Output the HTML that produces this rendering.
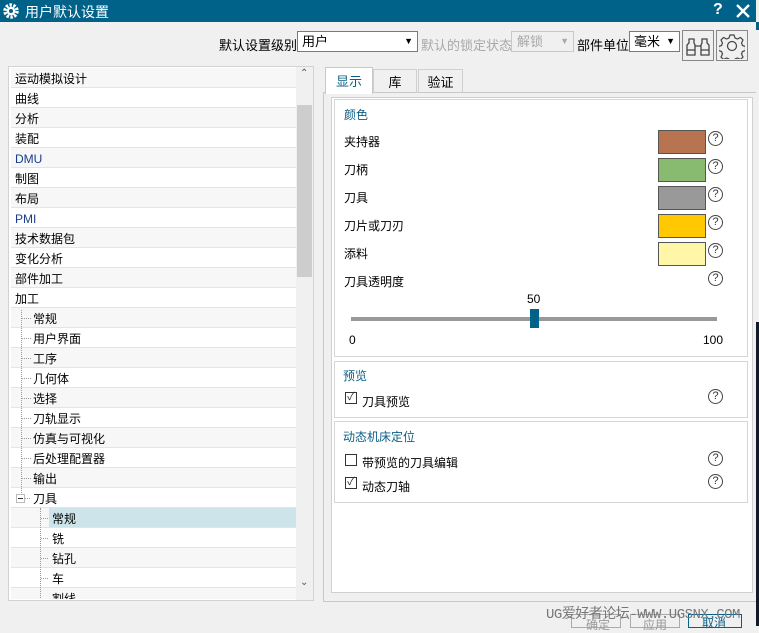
<!DOCTYPE html>
<html><head><meta charset="utf-8"><style>
*{margin:0;padding:0;box-sizing:border-box}
body{width:759px;height:626px;overflow:hidden;background:#f0f0f0;font-family:"Liberation Sans","Noto Sans CJK SC",sans-serif;font-size:12px;color:#000;position:relative}
.a{position:absolute}
.title{left:0;top:0;width:759px;height:22px;background:#006189;color:#fff;font-size:14px}
.row{position:absolute;left:0;width:287px;height:20px;line-height:19px;padding-top:2px;border-bottom:1px solid #e4e4e4;padding-left:4px;white-space:nowrap}
.blue{color:#1a3c8c}
.sw{position:absolute;left:658px;width:48px;height:24px;border:1px solid #555}
.q{position:absolute;left:708px;width:15px;height:15px;border:1.3px solid #444;border-radius:50%;font-size:11px;line-height:12px;text-align:center;color:#333}
.lbl{position:absolute;left:344px}
.grp{position:absolute;left:334px;width:414px;border:1px solid #d6d6d6;background:#fff}
.gt{position:absolute;color:#0a5f86;font-size:12px}
.cb{position:absolute;left:345px;width:12px;height:12px;border:1px solid #333;background:#fff;font-size:11px;line-height:9px;text-align:center;color:#333}
</style></head><body>
<div class="a title">
  <svg class="a" style="left:2px;top:2px" width="18" height="18" viewBox="0 0 18 18"><circle cx="9" cy="9" r="6" fill="none" stroke="#fff" stroke-width="3.5" stroke-dasharray="2.4 1.4"/><circle cx="9" cy="9" r="4.3" fill="#fff"/><circle cx="9" cy="9" r="2" fill="#006189"/></svg>
  <span class="a" style="left:25px;top:2px">用户默认设置</span>
  <span class="a" style="left:713px;top:1px;font-weight:bold;font-size:16px">?</span>
  <svg class="a" style="left:736px;top:4px" width="14" height="14"><path d="M1 1L13 13M13 1L1 13" stroke="#fff" stroke-width="2.4"/></svg>
</div>
<span class="a" style="left:219px;top:35px;font-size:13px">默认设置级别</span>
<div class="a" style="left:297px;top:31px;width:121px;height:21px;border:1px solid #7a7a7a;background:#fff;padding-left:4px;line-height:19px;font-size:13px">用户<span class="a" style="right:4px;top:0;font-size:9px">▼</span></div>
<span class="a" style="left:421px;top:35px;font-size:13px;color:#a8a8a8">默认的锁定状态</span>
<div class="a" style="left:511px;top:31px;width:63px;height:21px;border:1px solid #c8c8c8;background:#f0f0f0;color:#a8a8a8;padding-left:5px;line-height:19px;font-size:13px">解锁<span class="a" style="right:4px;top:0;font-size:9px">▼</span></div>
<span class="a" style="left:577px;top:35px;font-size:13px">部件单位</span>
<div class="a" style="left:629px;top:31px;width:51px;height:21px;border:1px solid #7a7a7a;background:#fff;padding-left:4px;line-height:19px;font-size:13px">毫米<span class="a" style="right:4px;top:0;font-size:9px">▼</span></div>
<div class="a" style="left:682px;top:30px;width:32px;height:31px;border:1px solid #888"></div>
<svg class="a" style="left:686px;top:34px" width="24" height="24" viewBox="0 0 24 24" fill="none" stroke="#444" stroke-width="1.3"><path d="M3 5h5v4l1 2v10H1V11l2-2zM16 5h5v4l2 2v10h-8V11l1-2zM9 12h6M1 16h8M15 16h8"/></svg>
<div class="a" style="left:716px;top:30px;width:32px;height:31px;border:1px solid #888"></div>
<svg class="a" style="left:719px;top:33px" width="26" height="26" viewBox="0 0 26 26" fill="none" stroke="#444" stroke-width="1.2"><path d="M11 2h4l1 3 2.5 1 3-1.5 2.5 2.5-1.5 3 1 2.5 3 1v4l-3 1-1 2.5 1.5 3-2.5 2.5-3-1.5-2.5 1-1 3h-4l-1-3-2.5-1-3 1.5-2.5-2.5 1.5-3-1-2.5-3-1v-4l3-1 1-2.5-1.5-3 2.5-2.5 3 1.5 2.5-1z"/><circle cx="13" cy="13" r="4.5"/></svg>

<!-- tree -->
<div class="a" style="left:8px;top:66px;width:306px;height:535px;border:1px solid #d2d2d2;background:#fff;overflow:hidden">
 <div class="a" style="left:2px;top:1px;width:287px;height:531px;overflow:hidden">
  <div class="row" style="top:0;background:#f7f7f7">运动模拟设计</div>
  <div class="row" style="top:20px">曲线</div>
  <div class="row" style="top:40px;background:#f7f7f7">分析</div>
  <div class="row" style="top:60px">装配</div>
  <div class="row blue" style="top:80px;background:#f7f7f7">DMU</div>
  <div class="row" style="top:100px">制图</div>
  <div class="row" style="top:120px;background:#f7f7f7">布局</div>
  <div class="row blue" style="top:140px">PMI</div>
  <div class="row" style="top:160px;background:#f7f7f7">技术数据包</div>
  <div class="row" style="top:180px">变化分析</div>
  <div class="row" style="top:200px;background:#f7f7f7">部件加工</div>
  <div class="row" style="top:220px">加工</div>
  <div class="row" style="top:240px;background:#f7f7f7;padding-left:22px">常规</div>
  <div class="row" style="top:260px;padding-left:22px">用户界面</div>
  <div class="row" style="top:280px;background:#f7f7f7;padding-left:22px">工序</div>
  <div class="row" style="top:300px;padding-left:22px">几何体</div>
  <div class="row" style="top:320px;background:#f7f7f7;padding-left:22px">选择</div>
  <div class="row" style="top:340px;padding-left:22px">刀轨显示</div>
  <div class="row" style="top:360px;background:#f7f7f7;padding-left:22px">仿真与可视化</div>
  <div class="row" style="top:380px;padding-left:22px">后处理配置器</div>
  <div class="row" style="top:400px;background:#f7f7f7;padding-left:22px">输出</div>
  <div class="row" style="top:420px;padding-left:22px">刀具</div>
  <div class="row" style="top:440px;background:#cce4ea;padding-left:41px">常规</div>
  <div class="a" style="left:0;top:440px;width:38px;height:19px;background:#f7f7f7"></div>
  <div class="row" style="top:460px;padding-left:41px">铣</div>
  <div class="row" style="top:480px;background:#f7f7f7;padding-left:41px">钻孔</div>
  <div class="row" style="top:500px;padding-left:41px">车</div>
  <div class="row" style="top:520px;background:#f7f7f7;padding-left:41px">割线</div>
  <div class="a" style="left:10px;top:242px;height:183px;border-left:1px dotted #999"></div>
  <div class="a" style="left:29px;top:440px;height:100px;border-left:1px dotted #999"></div>
  <svg class="a" style="left:0;top:0" width="287" height="531"><g stroke="#999" stroke-dasharray="1 1"><path d="M11 250.5h9M11 270.5h9M11 290.5h9M11 310.5h9M11 330.5h9M11 350.5h9M11 370.5h9M11 390.5h9M11 410.5h9M14 430.5h6M30 450.5h8M30 470.5h8M30 490.5h8M30 510.5h8"/></g><rect x="5.5" y="426.5" width="8" height="8" fill="#fff" stroke="#bbb"/><path d="M7 430.5h5" stroke="#333"/></svg>
 </div>
 <div class="a" style="left:287px;top:0;width:17px;height:533px;background:#f0f0f0"></div>
 <div class="a" style="left:288px;top:38px;width:15px;height:172px;background:#cdcdcd"></div>
 <span class="a" style="left:291px;top:1px;font-size:10px;color:#555">&#8963;</span>
 <span class="a" style="left:291px;top:510px;font-size:10px;color:#555">&#8964;</span>
</div>

<!-- tabs -->
<div class="a" style="left:323px;top:92px;width:435px;height:510px;border:1px solid #c8c8c8;background:#f0f0f0"></div>
<div class="a" style="left:325px;top:67px;width:48px;height:27px;border:1px solid #c8c8c8;border-bottom:none;background:#fff;color:#0a5f86;font-size:13px;text-align:center;line-height:28px">显示</div>
<div class="a" style="left:373px;top:69px;width:44px;height:24px;border:1px solid #d0d0d0;border-bottom:none;font-size:13px;text-align:center;line-height:26px">库</div>
<div class="a" style="left:418px;top:69px;width:45px;height:24px;border:1px solid #d0d0d0;border-bottom:none;font-size:13px;text-align:center;line-height:26px">验证</div>
<div class="a" style="left:331px;top:97px;width:422px;height:496px;border:1px solid #d0d0d0;background:#fff"></div>

<div class="grp" style="top:99px;height:258px"></div>
<span class="gt" style="left:344px;top:106px">颜色</span>
<span class="lbl" style="top:133px">夹持器</span>
<span class="lbl" style="top:161px">刀柄</span>
<span class="lbl" style="top:189px">刀具</span>
<span class="lbl" style="top:217px">刀片或刀刃</span>
<span class="lbl" style="top:245px">添料</span>
<span class="lbl" style="top:273px">刀具透明度</span>
<div class="sw" style="top:130px;background:#b87350"></div>
<div class="sw" style="top:158px;background:#88bb70"></div>
<div class="sw" style="top:186px;background:#999"></div>
<div class="sw" style="top:214px;background:#ffc800"></div>
<div class="sw" style="top:242px;background:#fff6a8"></div>
<div class="q" style="top:131px">?</div>
<div class="q" style="top:159px">?</div>
<div class="q" style="top:187px">?</div>
<div class="q" style="top:215px">?</div>
<div class="q" style="top:243px">?</div>
<div class="q" style="top:271px">?</div>
<span class="a" style="left:527px;top:292px">50</span>
<div class="a" style="left:351px;top:317px;width:366px;height:4px;background:#999"></div>
<div class="a" style="left:530px;top:309px;width:9px;height:19px;background:#006189"></div>
<span class="a" style="left:349px;top:333px">0</span>
<span class="a" style="left:703px;top:333px">100</span>

<div class="grp" style="top:361px;height:57px"></div>
<span class="gt" style="left:343px;top:367px">预览</span>
<div class="cb" style="top:392px">✓</div>
<span class="a" style="left:362px;top:393px">刀具预览</span>
<div class="q" style="top:389px">?</div>

<div class="grp" style="top:421px;height:82px"></div>
<span class="gt" style="left:343px;top:428px">动态机床定位</span>
<div class="cb" style="top:454px"></div>
<span class="a" style="left:362px;top:454px">带预览的刀具编辑</span>
<div class="q" style="top:451px">?</div>
<div class="cb" style="top:477px">✓</div>
<span class="a" style="left:362px;top:478px">动态刀轴</span>
<div class="q" style="top:474px">?</div>

<div class="a" style="left:756px;top:0;width:3px;height:626px;background:#f0f0f0"></div>
<div class="a" style="left:756px;top:322px;width:3px;height:304px;background:#111a2a"></div>
<div class="a" style="left:756px;top:22px;width:3px;height:8px;background:#006189"></div>

<div class="a" style="left:571px;top:614px;width:50px;height:14px;border:1px solid #aaa"></div>
<div class="a" style="left:630px;top:614px;width:50px;height:14px;border:1px solid #aaa"></div>
<div class="a" style="left:688px;top:614px;width:54px;height:14px;border:1px solid #0a5f86"></div>
<span class="a" style="left:586px;top:616px;color:#999">确定</span>
<span class="a" style="left:643px;top:616px;color:#999">应用</span>
<span class="a" style="left:702px;top:614px;color:#0a5f86">取消</span>
<span class="a" style="left:546px;top:603px;font-family:'Liberation Mono','Noto Sans CJK SC',monospace;font-size:14px;color:#777;letter-spacing:-0.5px">UG爱好者论坛-WWW.UGSNX.COM</span>
</body></html>
